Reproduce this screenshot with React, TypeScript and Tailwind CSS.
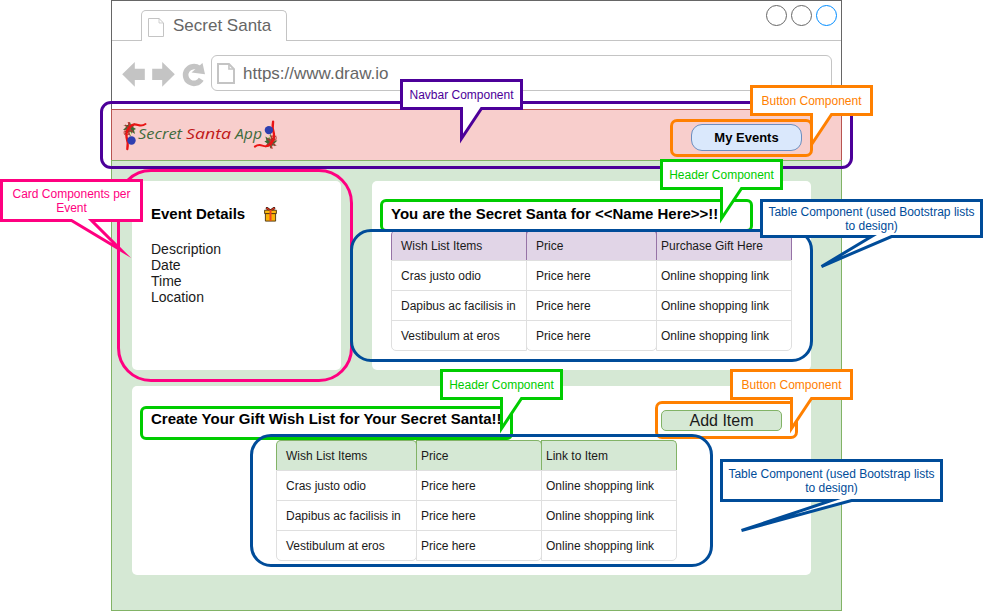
import React from "react";

type Col = { head: string; cells: string[]; className: string; pad: string; top: string; bottom: string };

const FONT = "font-['Liberation_Sans',Arial,sans-serif]";

function ListColumn({ col, headClass }: { col: Col; headClass: string }) {
  return (
    <div className={`flex flex-col text-xs text-[#1a1a1a] ${col.className}`}>
      <div className={`flex h-[30px] items-center border border-b-0 pt-px ${col.top} ${headClass} ${col.pad}`}>
        {col.head}
      </div>
      <div className={`flex flex-col border border-[#dfdfdf] ${col.bottom}`}>
        {col.cells.map((c, i) => (
          <div
            key={i}
            className={`flex items-center ${col.pad} ${i < 2 ? "h-[30px] border-b border-[#dfdfdf]" : "h-[29px]"}`}
          >
            {c}
          </div>
        ))}
      </div>
    </div>
  );
}

const items = ["Cras justo odio", "Dapibus ac facilisis in", "Vestibulum at eros"];
const prices = ["Price here", "Price here", "Price here"];
const links = ["Online shopping link", "Online shopping link", "Online shopping link"];

const santaCols: Col[] = [
  { head: "Wish List Items", cells: items, className: "w-[136px]", pad: "pl-[9px]", top: "rounded-tl-[5px]", bottom: "rounded-bl-[5px]" },
  { head: "Price", cells: prices, className: "w-[131px] -ml-px", pad: "pl-[9px]", top: "rounded-t-[5px]", bottom: "rounded-b-[5px]" },
  { head: "Purchase Gift Here", cells: links, className: "w-[136px] -ml-px", pad: "pl-1", top: "rounded-tr-[5px]", bottom: "rounded-br-[5px]" },
];

const wishCols: Col[] = [
  { head: "Wish List Items", cells: items, className: "w-[141px]", pad: "pl-[9px]", top: "rounded-t-[5px]", bottom: "rounded-b-[5px]" },
  { head: "Price", cells: prices, className: "w-[126px] -ml-px", pad: "pl-1", top: "rounded-tr-[5px]", bottom: "rounded-br-[5px]" },
  { head: "Link to Item", cells: links, className: "w-[136px] -ml-px", pad: "pl-1", top: "rounded-tr-[5px]", bottom: "rounded-br-[5px]" },
];

function PageIcon({ w, h, stroke }: { w: number; h: number; stroke: number }) {
  const o = stroke / 2;
  const f = w * 0.28;
  return (
    <svg width={w} height={h} className="shrink-0" fill="none" stroke="#c4c4c4" strokeWidth={stroke}>
      <path d={`M${o} ${o}H${w - f - o}L${w - o} ${f + o}V${h - o}H${o}Z`} />
      <path d={`M${w - f - o} ${o}V${f + o}H${w - o}`} strokeWidth={stroke * 0.8} />
    </svg>
  );
}

function GiftIcon() {
  return (
    <svg width="13" height="15" viewBox="0 0 13 15">
      <path d="M6.5 3.8 3 1.200M6.500 3.800 10 1.200" stroke="#3b1a10" strokeWidth="2.600" strokeLinecap="round" />
      <path d="M6.5 3.8 3 1.400M6.500 3.800 10 1.400" stroke="#e8351e" strokeWidth="1.400" strokeLinecap="round" />
      <path d="M1.4 6.5h10.2v7.6H1.4z" fill="#f9b208" stroke="#4a3010" strokeWidth=".9" />
      <path d="M.6 3.2h11.8v3.4H.6z" fill="#fbb80c" stroke="#4a3010" strokeWidth=".9" />
      <path d="M5.500 3h2v10.800h-2z" fill="#f0441f" />
    </svg>
  );
}

function Sprig() {
  return (
    <>
      <path d="M1 6l4 1-4 4 4 0-3 5 5-3 1 5 2-5 3 2-1-4 2-1-3-2 2-4-4 2-1-3-2 3z" fill="#3c6b35" />
      <path d="M3 6l8 7M12 6l-9 7M7 3v13" stroke="#a0392f" strokeWidth="1.5" />
      <path d="M6 10C1 10 1 17 5 16S9 8 6 3" stroke="#c83a36" strokeWidth="1" />
      <path d="M8 13l1 3" stroke="#f6e9a8" strokeWidth="1.200" />
      <path d="M8 7.500C10 5 13 5 16 6s5 .8 7.500-1" stroke="#ea1414" strokeWidth="2" strokeLinecap="round" />
      <path d="M8 7.500C5 11 4 15 4.500 18c1.500 4 1.500 8 .8 12" stroke="#ea1414" strokeWidth="2.300" strokeLinecap="round" />
      <circle cx="9.500" cy="21.500" r="4.200" fill="#2f3fb0" />
    </>
  );
}

function Logo() {
  return (
    <svg width="160" height="36" viewBox="0 0 160 36" fill="none">
      <Sprig />
      <g transform="rotate(180 78.2 16.3)"><Sprig /></g>
      <g className="font-['Open_Sans','Lato',sans-serif] text-[15px] italic">
        <text x="16" y="19.500" textLength="44" lengthAdjust="spacingAndGlyphs" fill="#3f6b3c">Secret</text>
        <text x="64" y="19.500" textLength="45" lengthAdjust="spacingAndGlyphs" fill="#c01818">Santa</text>
        <text x="113" y="19.500" textLength="27" lengthAdjust="spacingAndGlyphs" fill="#3f6b3c">App</text>
      </g>
    </svg>
  );
}

/* Speech-bubble label: a bordered box whose tail points at (tipX, bodyH + 30). */
function Callout({ place, color, textClass, w, bodyH, base, tipX, children }: {
  place: string; color: string; textClass: string; w: number; bodyH: number; base: number; tipX: number; children: React.ReactNode;
}) {
  const d = `M0 0H${w}V${bodyH}H${base + 20}L${tipX} ${bodyH + 30}L${base} ${bodyH}H0Z`;
  return (
    <div className={`absolute ${place}`}>
      <svg width={w + 3} height={bodyH + 40} viewBox={`-1.5 -1.5 ${w + 3} ${bodyH + 40}`} className="block overflow-visible">
        <path d={d} fill="#fff" stroke={color} strokeWidth="3" strokeMiterlimit="10" />
      </svg>
      <div className={`absolute inset-x-0 top-0 text-center text-xs leading-[14px] ${textClass}`}>{children}</div>
    </div>
  );
}

export default function App() {
  return (
    <div className={`relative h-[611px] w-[983px] overflow-hidden bg-white ${FONT}`}>
      <div className="ml-[111px] flex h-full w-[731px] flex-col">
        <header className="h-[109px] border-x border-t border-[#666]">
          <div className="flex h-10 items-start justify-between border-b border-[#c4c4c4]">
            <div className="ml-[29px] mt-[9px] flex h-[31px] w-[146px] items-center gap-[9px] rounded-t-[5px] border border-b-0 border-[#c4c4c4] bg-white pl-1.5 text-[17px] text-[#666]">
              <div className="pt-0.5"><PageIcon w={16} h={19} stroke={1} /></div>
              <span>Secret Santa</span>
            </div>
            <div className="mr-1 mt-1 flex gap-1">
              <div className="size-[21px] rounded-full border border-[#666]" />
              <div className="size-[21px] rounded-full border border-[#666]" />
              <div className="size-[21px] rounded-full border border-[#008cff]" />
            </div>
          </div>
          <div className="flex pl-[10px] pt-[14px]">
            <svg width="89" height="36" viewBox="122 55 89 36" fill="#c4c4c4">
              <path d="M122.2 74.3L134.8 62v6.7h10V80h-10v6.7z" />
              <path d="M174.8 74.3L162.2 62v6.7h-10V80h10v6.7z" />
              <path d="M201.200 79.300A8.400 8.400 0 1 1 199 68.200" fill="none" stroke="#c4c4c4" strokeWidth="5.600" />
              <path d="M202.500 63L205 74.200L191.500 72.500z" />
            </svg>
            <div className="flex h-9 w-[621px] items-center gap-2 rounded-[6px] border border-[#c4c4c4] pl-[5px] text-[17px] text-[#666]">
              <PageIcon w={18} h={21} stroke={2} />
              <span className="pt-0.5">https://www.draw.io</span>
            </div>
          </div>
        </header>

        <nav className="flex h-[51px] justify-between border-x border-t border-[#b85450] bg-[#f8cecc] pl-[10px] pr-[39px]">
          <div className="pt-[9px]"><Logo /></div>
          <button className="mt-[14px] h-[27px] w-[111px] rounded-[11px] border border-[#6c8ebf] bg-[#dae8fc] pt-px text-[13px] font-bold leading-6 text-black">
            My Events
          </button>
        </nav>

        <main className="flex h-[451px] flex-col gap-4 border border-[#82b366] bg-[#d5e8d4] pl-5 pt-5">
          <div className="flex gap-[31px]">
            <section className="h-[189px] w-[209px] rounded-[5px] bg-white pl-[19px] pt-6">
              <div className="flex items-center gap-[19px]">
                <h2 className="text-[15px] font-bold leading-[18px]">Event Details</h2>
                <GiftIcon />
              </div>
              <div className="mt-[18px] text-sm leading-4 text-[#1a1a1a]">
                <p>Description</p>
                <p>Date</p>
                <p>Time</p>
                <p>Location</p>
              </div>
            </section>
            <section className="h-[189px] w-[439px] rounded-[5px] bg-white pl-[19px] pt-6">
              <h2 className="text-[15px] font-bold leading-[18px]">You are the Secret Santa for &lt;&lt;Name Here&gt;&gt;!!</h2>
              <div className="mt-[7px] flex">
                {santaCols.map((c) => (
                  <ListColumn key={c.head} col={c} headClass="border-[#9673a6] bg-[#e1d5e7]" />
                ))}
              </div>
            </section>
          </div>
          <section className="h-[189px] w-[679px] rounded-[5px] bg-white pl-[19px] pt-6">
            <div className="flex h-[30px] items-start justify-between pr-[29px]">
              <h2 className="text-[15px] font-bold leading-[18px]">Create Your Gift Wish List for Your Secret Santa!!</h2>
              <button className="h-[21px] w-[121px] rounded-[5px] border border-[#82b366] bg-[#d5e8d4] text-base leading-[19px] text-[#1a1a1a]">
                Add Item
              </button>
            </div>
            <div className="ml-[125px] flex">
              {wishCols.map((c) => (
                <ListColumn key={c.head} col={c} headClass="border-[#82b366] bg-[#d5e8d4]" />
              ))}
            </div>
          </section>
        </main>
      </div>

      {/* Highlight outlines */}
      <div className="absolute left-[100px] top-[101px] h-[68px] w-[753px] rounded-[11px] border-3 border-[#4c0099]" />
      <div className="absolute left-[117px] top-[169px] h-[213px] w-[236px] rounded-[34px] border-3 border-[#ff0080]" />
      <div className="absolute left-[380px] top-[199px] h-[33px] w-[373px] rounded-[6px] border-3 border-[#00cc00]" />
      <div className="absolute left-[140px] top-[406px] h-[34px] w-[373px] rounded-[6px] border-3 border-[#00cc00]" />
      <div className="absolute left-[670px] top-[119px] h-[38px] w-[143px] rounded-[7px] border-3 border-[#ff8000]" />
      <div className="absolute left-[655px] top-[401px] h-[38px] w-[143px] rounded-[7px] border-3 border-[#ff8000]" />
      <div className="absolute left-[350px] top-[229px] h-[133px] w-[463px] rounded-[21px] border-3 border-[#004c99]" />
      <div className="absolute left-[250px] top-[434px] h-[133px] w-[463px] rounded-[21px] border-3 border-[#004c99]" />

      {/* Labels */}
      <Callout place="left-[400px] top-[79px]" color="#4c0099" textClass="pt-[9px] text-[#4c0099]" w={120} bodyH={28} base={60} tipX={60}>
        Navbar Component
      </Callout>
      <Callout place="left-[750px] top-[85px]" color="#ff8000" textClass="pt-[9px] text-[#ff8000]" w={120} bodyH={28} base={60} tipX={60}>
        Button Component
      </Callout>
      <Callout place="left-[660px] top-[159px]" color="#00cc00" textClass="pt-[9px] text-[#00cc00]" w={120} bodyH={28} base={60} tipX={60}>
        Header Component
      </Callout>
      <Callout place="left-[440px] top-[369px]" color="#00cc00" textClass="pt-[9px] text-[#00cc00]" w={120} bodyH={28} base={60} tipX={60}>
        Header Component
      </Callout>
      <Callout place="left-[730px] top-[369px]" color="#ff8000" textClass="pt-[9px] text-[#ff8000]" w={120} bodyH={28} base={60} tipX={60}>
        Button Component
      </Callout>
      <Callout place="left-0 top-[179px]" color="#ff0080" textClass="pt-2 text-[#ff0080]" w={140} bodyH={40} base={70} tipX={120}>
        Card Components per<br />Event
      </Callout>
      <Callout place="left-[760px] top-[199px]" color="#004c99" textClass="pt-[6px] text-[#004c99]" w={220} bodyH={36} base={110} tipX={60}>
        Table Component (used Bootstrap lists<br />to design)
      </Callout>
      <Callout place="left-[720px] top-[459px]" color="#004c99" textClass="pt-2 text-[#004c99]" w={220} bodyH={40} base={110} tipX={20}>
        Table Component (used Bootstrap lists<br />to design)
      </Callout>
    </div>
  );
}
